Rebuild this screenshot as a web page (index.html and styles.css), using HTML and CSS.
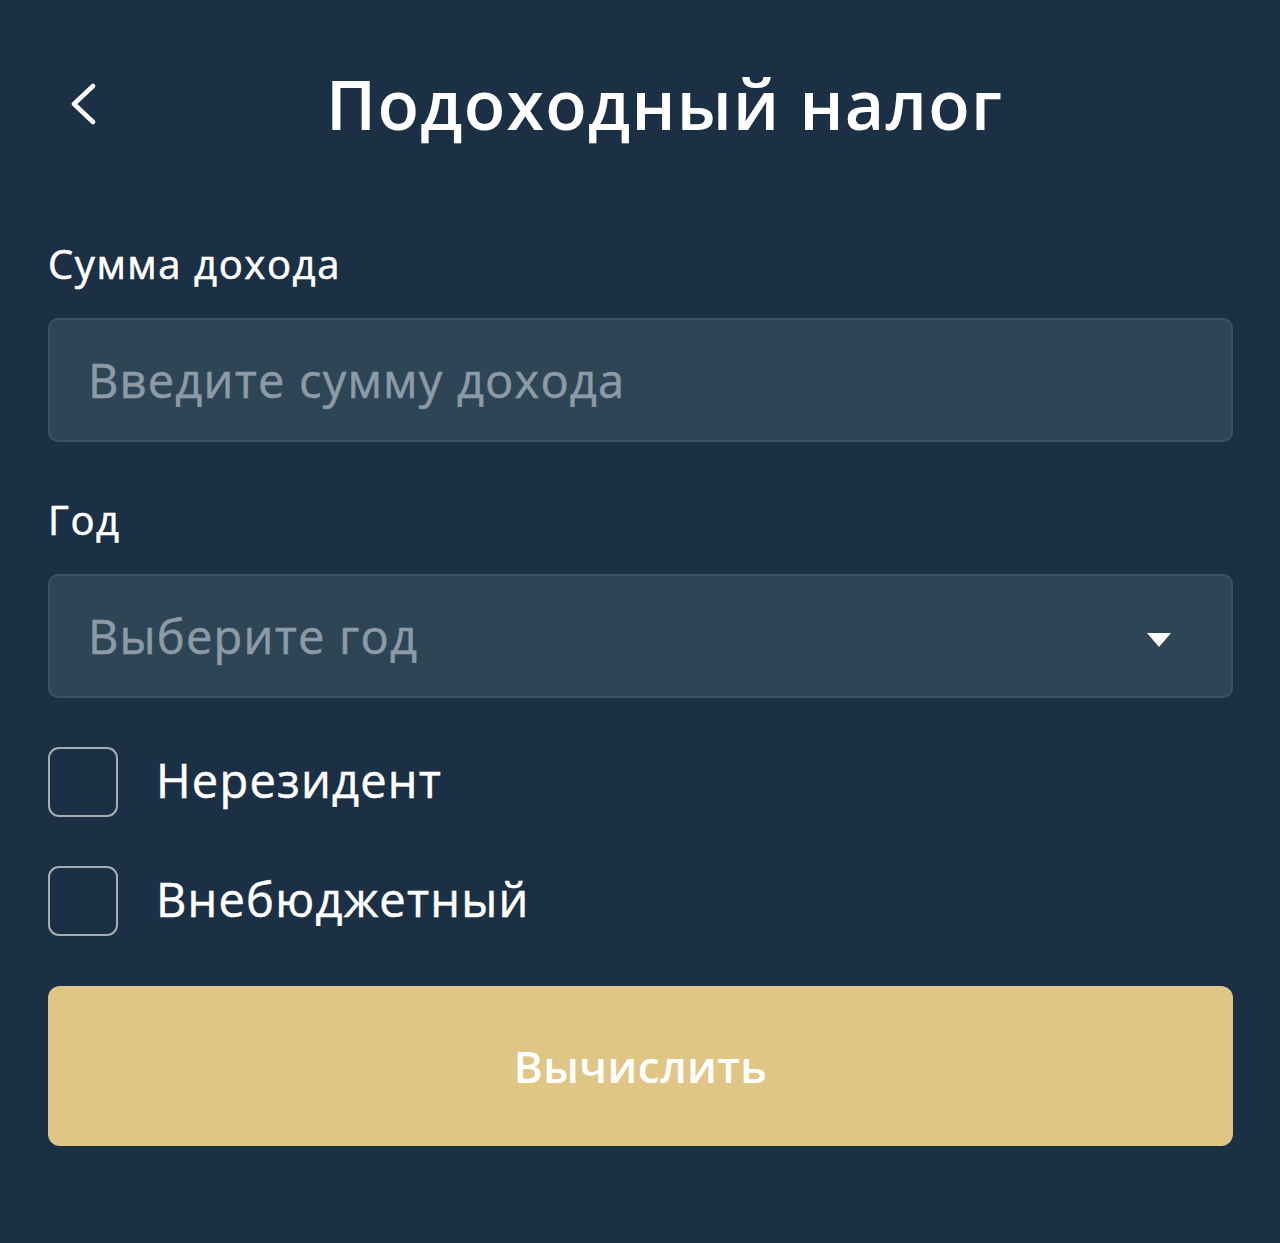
FILE: index.html
```html
<!DOCTYPE html>
<html lang="ru">
<head>
<meta charset="utf-8">
<title>Подоходный налог</title>
<link rel="stylesheet" href="styles.css">
</head>
<body>
<div class="screen">
  <header class="topbar">
    <button class="back" aria-label="Назад">
      <svg width="30" height="42" viewBox="0 0 30 42"><path d="M25 3 L6 21 L25 39" fill="none" stroke="#fff" stroke-width="4.5" stroke-linecap="round" stroke-linejoin="round"/></svg>
    </button>
    <h1 class="title">Подоходный налог</h1>
  </header>
  <form class="form">
    <label class="label">Сумма дохода</label>
    <div class="field"><span class="placeholder">Введите сумму дохода</span></div>
    <label class="label label-year">Год</label>
    <div class="field select"><span class="placeholder">Выберите год</span>
      <svg class="caret" width="24" height="16" viewBox="0 0 24 16"><path d="M0 1 L24 1 L12 15 Z" fill="#fff"/></svg>
    </div>
    <div class="checks">
      <div class="check"><span class="box"></span><span class="check-text">Нерезидент</span></div>
      <div class="check"><span class="box"></span><span class="check-text">Внебюджетный</span></div>
    </div>
    <button type="button" class="submit">Вычислить</button>
  </form>
</div>
</body>
</html>
```

FILE: styles.css
```css
html, body {
  margin: 0;
  padding: 0;
  background: #1b3044;
}
body {
  font-family: "Open Sans", "Noto Sans", sans-serif;
  color: #fff;
}
.screen {
  width: 1280px;
  height: 1243px;
  padding: 0 47px 0 48px;
  box-sizing: border-box;
}
.topbar {
  display: flex;
  align-items: center;
  height: 206px;
  position: relative;
}
.back {
  background: none;
  border: 0;
  padding: 0;
  margin-left: 20px;
  margin-top: 2px;
  width: 30px;
  height: 42px;
  display: flex;
}
.title {
  margin: 0 0 0 228px;
  font-size: 68px;
  font-weight: 600;
  letter-spacing: 1.3px;
}
.form {
  display: flex;
  flex-direction: column;
}
.label {
  font-size: 40px;
  font-weight: 500;
  letter-spacing: 1.6px;
  line-height: 52px;
  margin-top: 32px;
  height: 52px;
  -webkit-text-stroke: 0.6px #fff;
}
.label-year {
  margin-top: 52px;
}
.field {
  height: 124px;
  box-sizing: border-box;
  background: #2e4556;
  border: 2px solid #3b5264;
  border-radius: 10px;
  display: flex;
  align-items: center;
  padding-left: 38px;
}
.label + .field { margin-top: 28px; }
.placeholder {
  font-size: 47px;
  font-weight: 500;
  letter-spacing: 1.2px;
  color: #8c9ba6;
  -webkit-text-stroke: 0.5px #8c9ba6;
}
.select {
  justify-content: space-between;
  padding-right: 60px;
}
.caret { margin-top: 8px; }
.checks {
  display: flex;
  flex-direction: column;
  gap: 49px;
  margin-top: 49px;
}
.check {
  display: flex;
  align-items: center;
  gap: 38px;
}
.box {
  width: 70px;
  height: 70px;
  box-sizing: border-box;
  border: 2.5px solid #a7adb2;
  border-radius: 11px;
}
.check-text {
  font-size: 47px;
  font-weight: 500;
  letter-spacing: 1.2px;
  margin-top: -4px;
  -webkit-text-stroke: 0.5px #fff;
}
.submit {
  margin-top: 50px;
  height: 160px;
  border: 0;
  border-radius: 12px;
  background: #dfc684;
  color: #fff;
  font-family: inherit;
  font-size: 44px;
  font-weight: 600;
  letter-spacing: 0.4px;
}
```
